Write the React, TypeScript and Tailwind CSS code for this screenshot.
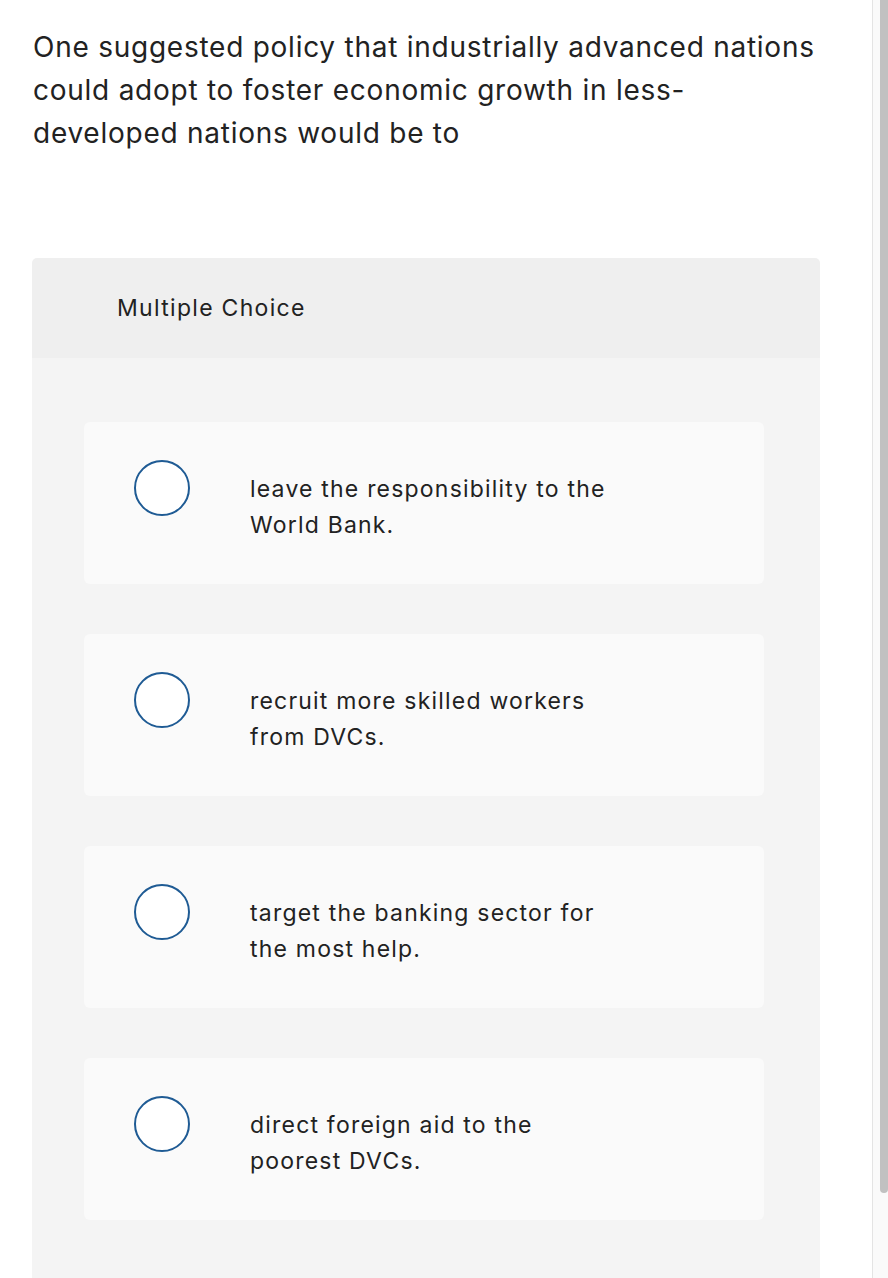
const options: [string, string][] = [
  ['leave the responsibility to the', 'World Bank.'],
  ['recruit more skilled workers', 'from DVCs.'],
  ['target the banking sector for', 'the most help.'],
  ['direct foreign aid to the', 'poorest DVCs.'],
]

function Radio() {
  return (
    <span className="block w-[56px] h-[56px] shrink-0 rounded-full border-2 border-[#1f5b94] bg-white" />
  )
}

function Option({ lines }: { lines: [string, string] }) {
  return (
    <div className="flex h-[162px] gap-[60px] rounded-[6px] bg-[#fafafa] pl-[50px] pt-[38px]">
      <Radio />
      <p className="mt-[11px] whitespace-nowrap text-[23px] leading-[36px] tracking-[1.2px] text-[#222]">
        {lines[0]}
        <br />
        {lines[1]}
      </p>
    </div>
  )
}

export default function App() {
  return (
    <div
      className="flex min-h-[1278px] bg-white"
      style={{ fontFamily: 'Inter, "Open Sans", sans-serif' }}
    >
      <main className="min-w-0 flex-1 pl-[32px] pr-[52px] pt-[26px]">
        <h1 className="whitespace-nowrap pl-[1px] text-[28px] leading-[43px] tracking-[0.75px] text-[#222]">
          One suggested policy that industrially advanced nations
          <br />
          could adopt to foster economic growth in less-
          <br />
          developed nations would be to
        </h1>

        <section className="mt-[103px] overflow-hidden rounded-t-[5px]">
          <div className="flex h-[100px] items-center bg-[#efefef] pl-[85px] text-[23px] tracking-[1.3px] text-[#222]">
            Multiple Choice
          </div>
          <div className="flex flex-col gap-[50px] bg-[#f4f4f4] pb-[100px] pl-[52px] pr-[56px] pt-[64px]">
            {options.map((o) => (
              <Option key={o[0]} lines={o} />
            ))}
          </div>
        </section>
      </main>

      {/* scrollbar */}
      <div className="flex w-[16px] shrink-0 border-l border-[#e4e4e4] bg-[#fafafa] pl-[7px]">
        <div className="h-[1193px] w-[8px] rounded-b-[5px] bg-[#c1c1c1]" />
      </div>
    </div>
  )
}
